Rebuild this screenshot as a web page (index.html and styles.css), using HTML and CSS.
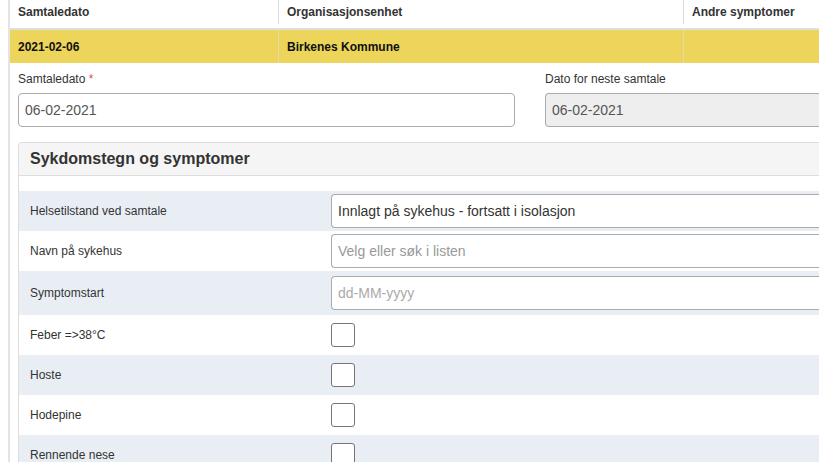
FILE: index.html
```html
<!DOCTYPE html>
<html lang="no">
<head>
<meta charset="utf-8">
<link rel="stylesheet" href="styles.css">
</head>
<body>
<div class="page">
  <div class="grid-table">
    <div class="row head">
      <div class="cell c1">Samtaledato</div>
      <div class="cell c2">Organisasjonsenhet</div>
      <div class="cell c3">Andre symptomer</div>
    </div>
    <div class="row data">
      <div class="cell c1">2021-02-06</div>
      <div class="cell c2">Birkenes Kommune</div>
      <div class="cell c3"></div>
    </div>
  </div>

  <div class="form">
    <div class="form-grid">
      <div class="field">
        <label class="lbl">Samtaledato <span class="req">*</span></label>
        <div class="input">06-02-2021</div>
      </div>
      <div class="field">
        <label class="lbl">Dato for neste samtale</label>
        <div class="input disabled open">06-02-2021</div>
      </div>
    </div>

    <div class="panel">
      <div class="panel-head">Sykdomstegn og symptomer</div>
      <div class="panel-body">
        <div class="frow tint">
          <div class="flabel">Helsetilstand ved samtale</div>
          <div class="input value open">Innlagt på sykehus - fortsatt i isolasjon</div>
        </div>
        <div class="frow">
          <div class="flabel">Navn på sykehus</div>
          <div class="input ph open">Velg eller søk i listen</div>
        </div>
        <div class="frow tint tall">
          <div class="flabel">Symptomstart</div>
          <div class="input ph light open">dd-MM-yyyy</div>
        </div>
        <div class="frow">
          <div class="flabel">Feber =&gt;38°C</div>
          <div class="check"></div>
        </div>
        <div class="frow tint">
          <div class="flabel">Hoste</div>
          <div class="check"></div>
        </div>
        <div class="frow">
          <div class="flabel">Hodepine</div>
          <div class="check"></div>
        </div>
        <div class="frow tint">
          <div class="flabel">Rennende nese</div>
          <div class="check"></div>
        </div>
      </div>
    </div>
  </div>
</div>
</body>
</html>
```

FILE: styles.css
```css
html, body {
  margin: 0;
  padding: 0;
  overflow: hidden;
  background: #fff;
}
body {
  font-family: "Liberation Sans", Arial, sans-serif;
  color: #333;
  width: 819px;
  height: 462px;
}
.page {
  margin-left: 8px;
  border-left: 2px solid #e4e4e4;
  width: 809px;
  height: 462px;
  overflow: hidden;
}
.grid-table .row {
  display: flex;
  font-size: 12px;
  font-weight: bold;
}
.cell {
  padding: 0 8px;
  display: flex;
  align-items: center;
  box-sizing: border-box;
}
.c1 { width: 269px; border-right: 1px solid #dcdcdc; }
.c2 { width: 405px; border-right: 1px solid #dcdcdc; }
.c3 { flex: 1; }
.row.head {
  height: 30px;
  border-bottom: 2px solid #dedede;
  box-sizing: border-box;
  padding-bottom: 4px;
}
.row.head .cell { color: #333; }
.row.data {
  height: 33px;
  background: #ecd55a;
  color: #111;
}
.row.data .cell { border-right-color: #e2dca8; }
.row.data .c3 { border: none; }

.form {
  padding: 8px 0 0 8px;
}
.form-grid {
  display: grid;
  grid-template-columns: 497px 1fr;
  column-gap: 30px;
}
.lbl {
  display: block;
  font-size: 12px;
  line-height: 17px;
  color: #333;
  margin-bottom: 5px;
}
.req { color: #d9534f; }
.input {
  box-sizing: border-box;
  height: 34px;
  border: 1px solid #ababab;
  border-radius: 4px;
  padding: 0 6px;
  display: flex;
  align-items: center;
  font-size: 14px;
  color: #555;
  background: #fff;
}
.input.open {
  border-right: none;
  border-radius: 4px 0 0 4px;
}
.input.disabled {
  background: #eee;
}
.panel {
  margin-top: 15px;
  border: 1px solid #ddd;
  border-right: none;
  border-radius: 4px 0 0 0;
}
.panel-head {
  height: 33px;
  box-sizing: border-box;
  background: #f5f5f5;
  border-bottom: 1px solid #ddd;
  padding: 0 11px;
  display: flex;
  align-items: center;
  font-size: 16px;
  font-weight: bold;
  color: #333;
  border-radius: 4px 0 0 0;
}
.panel-body {
  padding-top: 15px;
}
.frow {
  display: flex;
  align-items: center;
  height: 40px;
}
.frow.tall { height: 44px; }
.frow.tint { background: #e9eef5; }
.flabel {
  width: 312px;
  box-sizing: border-box;
  padding-left: 11px;
  font-size: 12px;
  color: #333;
}
.frow .input { flex: 1; }
.input.value { color: #333; }
.input.ph { color: #999; }
.input.ph.light { color: #aaa; }
.check {
  width: 24px;
  height: 24px;
  box-sizing: border-box;
  border: 1px solid #757575;
  border-radius: 3px;
  background: #fff;
}
```
